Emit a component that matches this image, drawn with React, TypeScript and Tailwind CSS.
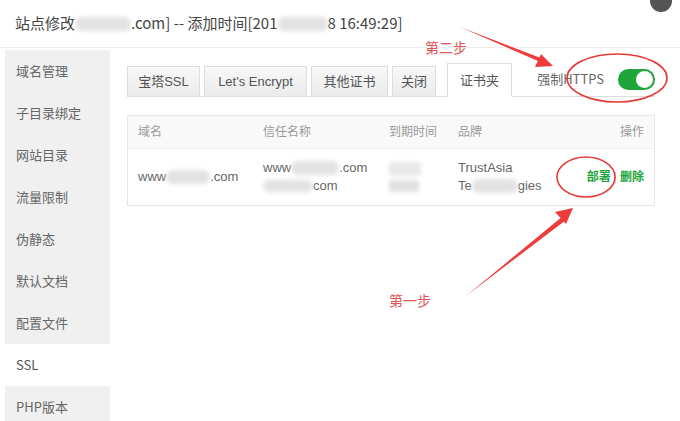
import React from 'react';

const MENU = ['域名管理', '子目录绑定', '网站目录', '流量限制', '伪静态', '默认文档', '配置文件', 'SSL', 'PHP版本'];

const TABS = [
  { label: '宝塔SSL', w: 'w-[73px]' },
  { label: "Let's Encrypt", w: 'w-[103px]' },
  { label: '其他证书', w: 'w-[77px]' },
  { label: '关闭', w: 'w-[44px]' },
];

const Blur = ({ w, h = 'h-[14px]' }: { w: string; h?: string }) => (
  <span className={`inline-block ${w} ${h} bg-[#e2e2e2] rounded-full blur-[2px] align-middle`} />
);

const App: React.FC = () => {
  return (
    <div className="relative w-[680px] h-[421px] overflow-hidden bg-white text-[#555] font-['Noto_Sans_CJK_SC','Noto_Sans',sans-serif]">
      {/* title bar */}
      <div className="h-[48px] flex items-center pl-[15px] text-[15px] text-[#444] border-b border-[#ececec] bg-white">
        <span>站点修改</span>
        <Blur w="w-[56px]" />
        <span>.com] -- 添加时间[201</span>
        <Blur w="w-[50px]" />
        <span>8 16:49:29]</span>
      </div>
      <div className="absolute right-[8px] top-[-10px] w-[22px] h-[22px] rounded-full bg-[#555]" />

      <div className="flex pt-[2px]">
        {/* side menu */}
        <div className="w-[105px] ml-[5px] flex flex-col">
          {MENU.map(m => (
            <div
              key={m}
              className={`h-[42px] flex items-center pl-[11px] text-[13px] ${m === 'SSL' ? 'bg-white text-[#555]' : 'bg-[#f0f0f0] text-[#666]'}`}
            >
              {m}
            </div>
          ))}
        </div>

        {/* content */}
        <div className="flex-1 pl-[17px] pr-[25px] pt-[15px]">
          <div className="flex items-end border-b border-[#ddd] h-[32px]">
            {TABS.map(t => (
              <div
                key={t.label}
                className={`${t.w} h-[30px] mr-[4px] flex items-center justify-center text-[13px] text-[#555] border border-[#ddd] border-b-0 bg-gradient-to-b from-[#f8f8f8] to-[#ebebeb] font-['Liberation_Sans','Noto_Sans_CJK_SC',sans-serif]`}
              >
                {t.label}
              </div>
            ))}
            <div className="ml-[7px] w-[65px] h-[34px] mb-[-1px] flex items-center justify-center text-[13px] text-[#555] border border-[#ddd] border-b-white bg-white">
              证书夹
            </div>
            <div className="flex-1 h-full flex items-center justify-end pb-[3px]">
              <span className="text-[13px] text-[#666] mr-[14px]">强制HTTPS</span>
              <div className="w-[37px] h-[21px] rounded-full bg-[#20a53a] flex items-center justify-end pr-[2px]">
                <div className="w-[17px] h-[17px] rounded-full bg-white" />
              </div>
            </div>
          </div>

          {/* certificate table */}
          <div className="mt-[18px] border border-[#e6e6e6] text-[13px] font-['Liberation_Sans','Noto_Sans_CJK_SC',sans-serif]">
            <div className="h-[33px] bg-[#f9f9f9] border-b border-[#eee] grid grid-cols-[125px_126px_69px_1fr_60px] items-center pl-[10px] pr-[10px] text-[12px] text-[#999]">
              <span>域名</span>
              <span>信任名称</span>
              <span>到期时间</span>
              <span>品牌</span>
              <span className="text-right">操作</span>
            </div>
            <div className="h-[56px] grid grid-cols-[125px_126px_69px_1fr_88px] items-center pl-[10px] pr-[10px] text-[#666] leading-[18px]">
              <div className="flex items-center">
                <span>www</span>
                <Blur w="w-[44px]" />
                <span>.com</span>
              </div>
              <div className="flex flex-col">
                <div className="flex items-center">
                  <span>www</span>
                  <Blur w="w-[48px]" />
                  <span>.com</span>
                </div>
                <div className="flex items-center">
                  <Blur w="w-[50px]" h="h-[12px]" />
                  <span>com</span>
                </div>
              </div>
              <div className="flex flex-col gap-[4px]">
                <span className="w-[32px] h-[14px] bg-[#e8e8e8] rounded-[3px] blur-[2px]" />
                <span className="w-[30px] h-[12px] bg-[#e0e0e0] blur-[2px]" />
              </div>
              <div className="flex flex-col">
                <span>TrustAsia</span>
                <div className="flex items-center">
                  <span>Te</span>
                  <Blur w="w-[46px]" />
                  <span>gies</span>
                </div>
              </div>
              <div className="flex items-center justify-end text-[12px] font-bold text-[#20a53a]">
                <span>部署</span>
                <span className="mx-[3px] font-normal text-[#ccc]">|</span>
                <span>删除</span>
              </div>
            </div>
          </div>
        </div>
      </div>

      {/* annotations */}
      <span className="absolute left-[425px] top-[37px] text-[14px] text-[#e05555] font-['Noto_Sans_CJK_SC',serif]">第二步</span>
      <span className="absolute left-[389px] top-[290px] text-[14px] text-[#e05555] font-['Noto_Sans_CJK_SC',serif]">第一步</span>
      <svg className="absolute left-0 top-0 pointer-events-none" width="680" height="421" viewBox="0 0 680 421">
        <ellipse cx="617" cy="78" rx="50" ry="24" fill="none" stroke="#e53935" strokeWidth="1.6" />
        <ellipse cx="586" cy="177" rx="29" ry="20" fill="none" stroke="#e53935" strokeWidth="1.6" />
        <polygon points="460,27 546,60 545,64" fill="#ee3b3b" />
        <polygon points="553,66 535,67 541,54" fill="#ee3b3b" />
        <polygon points="466,296 563,216 566,220" fill="#ee3b3b" />
        <polygon points="573,208 555,212 566,224" fill="#ee3b3b" />
      </svg>
    </div>
  );
};

export default App;
